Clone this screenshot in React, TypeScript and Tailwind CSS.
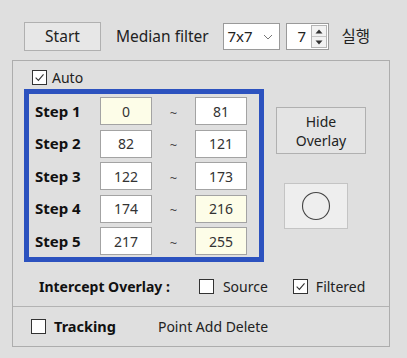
import React from "react";

function Check({ checked }: { checked?: boolean }) {
  return (
    <span className="flex h-[15px] w-[15px] shrink-0 items-center justify-center border border-[#333] bg-white">
      {checked && (
        <svg viewBox="0 0 12 12" className="h-[11px] w-[11px]">
          <path d="M1.8 6.2 L4.8 9.2 L10.4 2.6" fill="none" stroke="#333" strokeWidth="1.2" />
        </svg>
      )}
    </span>
  );
}

function Box({ value, yellow }: { value: string; yellow?: boolean }) {
  return (
    <div
      className={`flex h-[28px] w-[52px] items-center justify-center border border-[#a3a3a3] text-[14px] text-[#333] ${
        yellow ? "bg-[#fdfde8]" : "bg-white"
      }`}
    >
      {value}
    </div>
  );
}

const steps = [
  { label: "Step 1", from: "0", to: "81", fy: true, ty: false },
  { label: "Step 2", from: "82", to: "121", fy: false, ty: false },
  { label: "Step 3", from: "122", to: "173", fy: false, ty: false },
  { label: "Step 4", from: "174", to: "216", fy: false, ty: true },
  { label: "Step 5", from: "217", to: "255", fy: false, ty: true },
];

export default function App() {
  return (
    <div className="h-[358px] w-[407px] overflow-hidden bg-[#dfdfdf] font-['Noto_Sans','Noto_Sans_CJK_KR',sans-serif] text-[14px] text-[#222]">
      {/* top toolbar */}
      <div className="mt-[22px] flex h-[29px] items-center pl-[24px] text-[15.5px]">
        <button className="flex h-[29px] w-[77px] items-center justify-center border border-[#b0b0b0] bg-[#e7e7e7]">
          Start
        </button>
        <span className="ml-[15px]">Median filter</span>
        <div className="ml-auto flex h-[27px] w-[57px] items-center justify-between border border-[#9a9a9a] bg-white pl-[3px] pr-[6px] text-[15px]">
          <span>7x7</span>
          <svg viewBox="0 0 10 6" className="h-[6px] w-[10px]">
            <path d="M1 1 L5 5 L9 1" fill="none" stroke="#777" strokeWidth="1" />
          </svg>
        </div>
        <div className="ml-[6px] flex h-[27px] w-[43px] items-center border border-[#9a9a9a] bg-white text-[15px]">
          <span className="ml-[10px] w-[12px]">7</span>
          <div className="ml-auto mr-[1px] flex h-[23px] w-[16px] flex-col border border-[#b5b5b5] bg-[#f2f2f2]">
            <div className="flex flex-1 items-center justify-center border-b border-[#c5c5c5]">
              <svg viewBox="0 0 8 5" className="h-[5px] w-[8px]">
                <path d="M0.5 4.5 L4 0.5 L7.5 4.5 Z" fill="#333" />
              </svg>
            </div>
            <div className="flex flex-1 items-center justify-center">
              <svg viewBox="0 0 8 5" className="h-[5px] w-[8px]">
                <path d="M0.5 0.5 L4 4.5 L7.5 0.5 Z" fill="#333" />
              </svg>
            </div>
          </div>
        </div>
        <span className="ml-[12px] mr-[37px]">실행</span>
      </div>

      {/* group box */}
      <div className="ml-[12px] mt-[9px] flex h-[287px] w-[378px] flex-col border border-[#adadad]">
        <div className="mt-[9px] flex h-[15px] items-center gap-[5px] pl-[19px]">
          <Check checked />
          <span>Auto</span>
        </div>

        <div className="ml-[11px] mt-[4px] flex">
          <div className="flex h-[173px] w-[240px] flex-col gap-[4.5px] border-[5px] border-[#2c52bf] pb-[2px] pl-[6px] pt-[3px]">
            {steps.map((s) => (
              <div key={s.label} className="flex h-[28px] items-center">
                <span className="w-[65px] text-[15px] font-bold text-[#111]">{s.label}</span>
                <Box value={s.from} yellow={s.fy} />
                <span className="mt-[5px] w-[43px] text-center text-[13px] text-[#444]">~</span>
                <Box value={s.to} yellow={s.ty} />
              </div>
            ))}
          </div>
          <div className="flex flex-col">
            <button className="ml-[12px] mt-[18px] flex h-[47px] w-[90px] flex-col items-center justify-center border border-[#b0b0b0] bg-[#e4e4e4] leading-[19px]">
              <span>Hide</span>
              <span>Overlay</span>
            </button>
            <button className="ml-[20px] mt-[29px] flex h-[46px] w-[64px] items-center justify-center border border-[#c4c4c4] bg-[#eeeeee]">
              <svg viewBox="0 0 30 30" className="h-[30px] w-[30px]">
                <circle cx="15" cy="15" r="13.5" fill="none" stroke="#444" strokeWidth="1.1" />
              </svg>
            </button>
          </div>
        </div>

        <div className="mt-[10px] flex h-[28px] items-center pl-[26px]">
          <span className="font-bold text-[#111]">Intercept Overlay :</span>
          <span className="ml-[29px]">
            <Check />
          </span>
          <span className="ml-[9px]">Source</span>
          <span className="ml-[25px]">
            <Check checked />
          </span>
          <span className="ml-[8px]">Filtered</span>
        </div>

        <div className="mt-[6px] flex flex-1 items-center border-t border-[#b3b3b3] pl-[18px]">
          <Check />
          <span className="ml-[8px] text-[14.5px] font-bold text-[#111]">Tracking</span>
          <span className="ml-[42px]">Point Add Delete</span>
        </div>
      </div>
    </div>
  );
}
